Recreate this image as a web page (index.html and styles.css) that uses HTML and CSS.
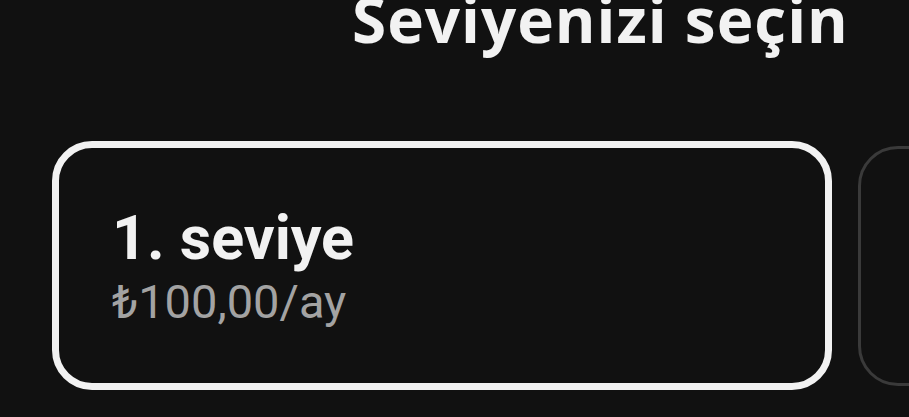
FILE: index.html
```html
<!DOCTYPE html>
<html lang="tr">
<head>
<meta charset="utf-8">
<link rel="stylesheet" href="styles.css">
</head>
<body>
<div class="screen">
  <h1 class="title">Seviyenizi seçin</h1>
  <div class="tiers">
    <div class="tier tier--selected">
      <div class="tier-name">1. seviye</div>
      <div class="tier-price">₺100,00/ay</div>
    </div>
    <div class="tier tier--other"></div>
  </div>
</div>
</body>
</html>
```
FILE: styles.css
```css
html, body {
  margin: 0;
  padding: 0;
  background: #111111;
  overflow: hidden;
}
.screen {
  width: 909px;
  height: 417px;
  overflow: hidden;
  font-family: Roboto, "Liberation Sans", sans-serif;
  color: #f2f2f2;
}
.title {
  margin: -12px 0 0 0;
  padding-left: 352px;
  font-family: "Open Sans", Roboto, sans-serif;
  font-size: 62px;
  line-height: 62px;
  font-weight: 700;
  letter-spacing: 1px;
  white-space: nowrap;
}
.tiers {
  display: flex;
  align-items: center;
  gap: 26px;
  margin-top: 91px;
  padding-left: 52px;
}
.tier {
  flex: none;
  box-sizing: border-box;
  border-radius: 40px;
  display: flex;
  flex-direction: column;
  justify-content: center;
}
.tier--selected {
  width: 780px;
  height: 249px;
  border: 7px solid #f2f2f2;
  padding-left: 53px;
}
.tier--other {
  width: 780px;
  height: 240px;
  border: 3px solid #3a3a3a;
}
.tier-name {
  font-size: 61px;
  line-height: 72px;
  font-weight: 700;
  color: #f2f2f2;
}
.tier-price {
  font-size: 47px;
  line-height: 55px;
  font-weight: 400;
  color: #a3a3a3;
}
```
